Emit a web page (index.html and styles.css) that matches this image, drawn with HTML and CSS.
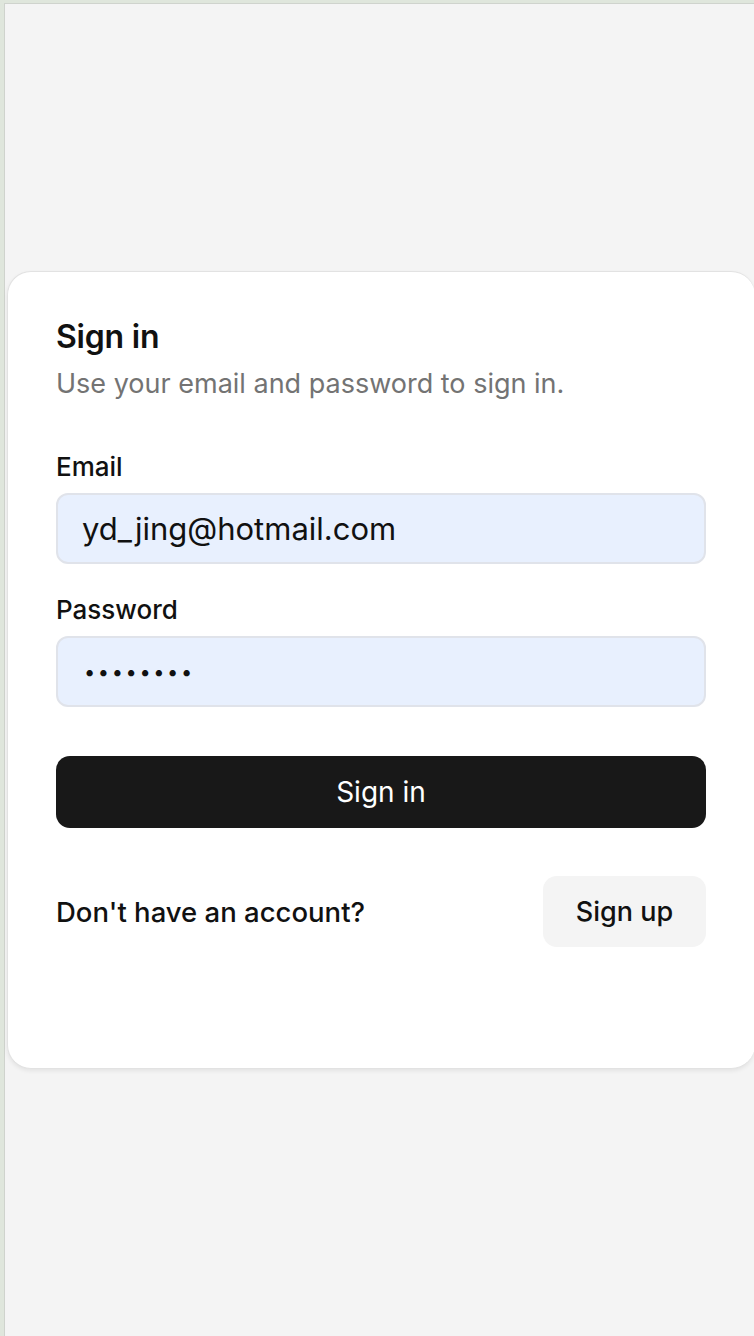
FILE: index.html
```html
<!DOCTYPE html>
<html lang="en">
<head>
<meta charset="utf-8">
<title>Sign in</title>
<link rel="stylesheet" href="styles.css">
</head>
<body>
<div class="frame">
  <main class="card">
    <h1 class="title">Sign in</h1>
    <p class="subtitle">Use your email and password to sign in.</p>
    <form class="form">
      <label class="field">
        <span class="label">Email</span>
        <input class="input" type="email" value="yd_jing@hotmail.com">
      </label>
      <label class="field">
        <span class="label">Password</span>
        <input class="input input-password" type="password" value="12345678">
      </label>
      <button class="primary" type="button">Sign in</button>
    </form>
    <div class="footer">
      <span class="footer-text">Don't have an account?</span>
      <button class="secondary" type="button">Sign up</button>
    </div>
  </main>
</div>
</body>
</html>
```
FILE: styles.css
```css
* { box-sizing: border-box; }
html, body { margin: 0; height: 100%; }
body {
  background: #dfe6dc;
  font-family: Inter, "Noto Sans", sans-serif;
  color: #111;
}
.frame {
  display: flex;
  flex-direction: column;
  justify-content: center;
  margin-left: 4px;
  margin-top: 3px;
  height: calc(100% - 3px);
  border-top: 1px solid #cfd3cd;
  border-left: 1px solid #cfd3cd;
  background: #f4f4f4;
  padding-left: 2px;
}
.card {
  background: #fff;
  border: 1px solid #e2e2e2;
  border-right: none;
  border-radius: 24px;
  box-shadow: 0 2px 4px rgba(0,0,0,0.07);
  padding: 47px 48px 121px 48px;
  width: 748px;
}
.title {
  margin: 0;
  font-size: 32px;
  font-weight: 600;
  line-height: 36px;
  letter-spacing: -0.2px;
}
.subtitle {
  margin: 13px 0 0;
  font-size: 27px;
  line-height: 32px;
  color: #737373;
}
.form {
  display: flex;
  flex-direction: column;
  margin-top: 51px;
}
.field {
  display: flex;
  flex-direction: column;
  gap: 10px;
  margin-bottom: 30px;
}
.label {
  font-size: 26px;
  font-weight: 500;
  line-height: 32px;
}
.input {
  height: 71px;
  width: 650px;
  border: 2px solid #e0e3ea;
  border-radius: 12px;
  background: #e8f0fe;
  font-family: Inter, "Noto Sans", sans-serif;
  font-size: 31px;
  color: #111;
  padding: 0 24px;
  outline: none;
}
.input-password {
  font-size: 20px;
  letter-spacing: 2.6px;
  padding-left: 26px;
}
.primary {
  margin-top: 19px;
  height: 72px;
  width: 650px;
  border: none;
  border-radius: 14px;
  background: #181818;
  color: #fff;
  font-family: Inter, "Noto Sans", sans-serif;
  font-size: 28px;
}
.footer {
  display: flex;
  justify-content: space-between;
  align-items: center;
  width: 650px;
  margin-top: 48px;
}
.footer-text {
  font-size: 27.5px;
  font-weight: 450;
}
.secondary {
  height: 71px;
  width: 163px;
  border: none;
  border-radius: 14px;
  background: #f4f4f4;
  color: #111;
  font-family: Inter, "Noto Sans", sans-serif;
  font-size: 27px;
  font-weight: 450;
}
```
